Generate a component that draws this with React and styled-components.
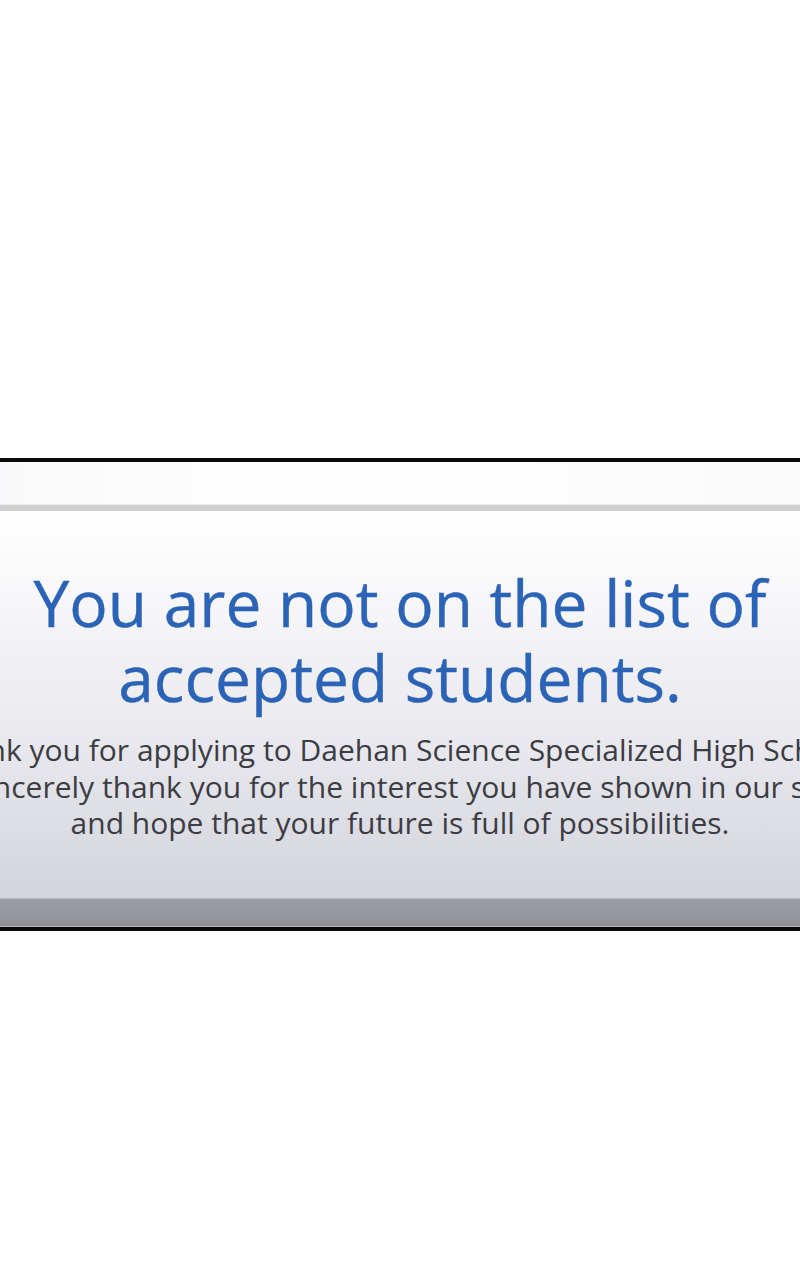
import React from 'react'
import styled, { createGlobalStyle } from 'styled-components'

const GlobalStyle = createGlobalStyle`
    html, body {
        margin: 0;
        padding: 0;
        background: #ffffff;
    }
    body {
        font-family: "Open Sans", "Noto Sans", sans-serif;
        overflow: hidden;
    }
`

const Page = styled.div`
    width: 800px;
    height: 1280px;
    display: flex;
    flex-direction: column;
    justify-content: flex-start;
    padding-top: 458px;
    box-sizing: border-box;
    overflow: hidden;
`

const Notice = styled.div`
    width: 100%;
    border-top: 4px solid #0a0a0a;
    border-bottom: 4px solid #0a0a0a;
    display: flex;
    flex-direction: column;
    background: #ffffff;
`

const TopBar = styled.div`
    height: 43px;
    background: linear-gradient(90deg, #f9f9fb 0%, #fefefe 30%, #fdfdfd 70%, #fafafb 100%);
    border-bottom: 6px solid #d0d0d2;
    box-shadow: 0 -1px 0 #e8e8e8 inset;
`

const Body = styled.div`
    height: 387px;
    background: linear-gradient(180deg, #ffffff 0%, #f8f8fa 20%, #e8e8ee 60%, #d3d3dc 100%);
    display: flex;
    flex-direction: column;
    align-items: center;
    padding-top: 54px;
    box-sizing: border-box;
    overflow: hidden;
`

const Title = styled.h1`
    margin: 0;
    font-family: "Open Sans", sans-serif;
    font-weight: 400;
    font-size: 64px;
    line-height: 75px;
    color: #2b63b6;
    text-align: center;
    -webkit-text-stroke: 0.4px #2b63b6;
`

const Message = styled.p`
    margin: 17px 0 0;
    font-family: "Open Sans", sans-serif;
    font-size: 30px;
    line-height: 36.5px;
    color: #3c3c43;
    text-align: center;
    white-space: nowrap;
`

const Footer = styled.div`
    height: 27px;
    border-top: 1px solid #b4b4bc;
    border-bottom: 1px solid #b8b8c0;
    background: linear-gradient(180deg, #9c9ca4 0%, #96969e 60%, #8f8f98 100%);
`

export default function App() {
    return (
        <>
            <GlobalStyle />
            <Page>
                <Notice>
                    <TopBar />
                    <Body>
                        <Title>
                            You are not on the list of<br />
                            accepted students.
                        </Title>
                        <Message>
                            Thank you for applying to Daehan Science Specialized High School.<br />
                            We sincerely thank you for the interest you have shown in our school<br />
                            and hope that your future is full of possibilities.
                        </Message>
                    </Body>
                    <Footer />
                </Notice>
            </Page>
        </>
    )
}
